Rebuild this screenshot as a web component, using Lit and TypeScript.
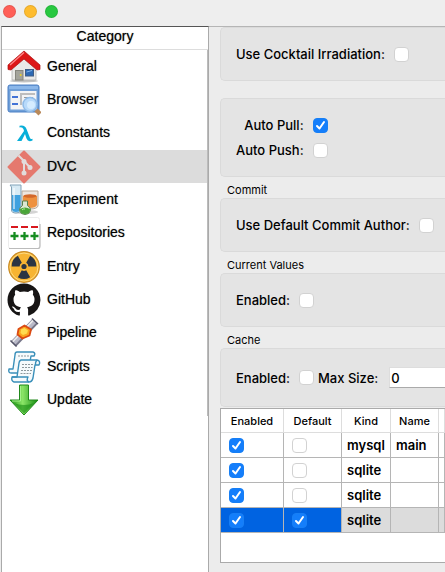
import { LitElement, html, css, svg, nothing } from "lit";
import { customElement, property, state } from "lit/decorators.js";
import { classMap } from "lit/directives/class-map.js";

const icons: Record<string, unknown> = {
  General: svg`
    <ellipse cx="17" cy="31" rx="14" ry="1.5" fill="#999" opacity=".6"/>
    <path d="M5 15 17 5 29 15V30H5Z" fill="#e9e9e7" stroke="#aaa" stroke-width=".7"/>
    <rect x="8.500" y="20.500" width="7.500" height="9.500" fill="#a3a39b" stroke="#85857d"/>
    <circle cx="13.700" cy="25" r="1" fill="#e8cf2c"/>
    <rect x="18.500" y="19.500" width="8" height="6.500" fill="#2c69b4" stroke="#3f5d84"/>
    <path d="M19.500 22 25 20.500" stroke="#85b5e6"/>
    <path d="M17 1 1 15V19.500L4 20 17 9 30 20 33 19.500V15Z" fill="#dd1717" stroke="#a90d0d" stroke-width=".7"/>
    <path d="M17 2.500 3 15" stroke="#ff8989" stroke-width="1.300" fill="none"/>`,
  Browser: svg`
    <rect x="1" y="2" width="31" height="27" rx="2" fill="#6f9fd8" stroke="#4c80c5"/>
    <path d="M2 4Q2 3 3 3H30Q31 3 31 4V6H2Z" fill="#8bb7ea"/>
    <rect x="3.500" y="8" width="26" height="18.500" fill="#f3f4f5"/>
    <path d="M5 14H11M5 21H11" stroke="#4373d6" stroke-width="2"/>
    <path d="M14 22V11H28" fill="none" stroke="#bdbdbd" stroke-width="2"/>
    <path d="M17 14.500H26" stroke="#999"/>
    <path d="m29 27 4 4" stroke="#b9895a" stroke-width="4.500"/>
    <circle cx="23" cy="21.500" r="7" fill="#b8dafa" stroke="#8fbbe8" stroke-width="1.500"/>
    <circle cx="24" cy="22" r="4" fill="#d5ecff"/>`,
  Constants: svg`
    <path d="M12.500 11.500V9.700Q18 8.500 19.500 13L23 22Q23.700 23.800 25.500 22.700V24.500Q21 26.500 19.500 22.500L18 18 14.500 25H10L17 15 16.500 13.300Q15.500 10.800 12.500 11.500Z" fill="#08afd9"/>`,
  DVC: svg`
    <path d="M17 1.500 32.500 17 17 32.500 1.500 17Z" fill="#e5796e" stroke="#e5796e" stroke-width="2" stroke-linejoin="round"/>
    <g fill="none" stroke="#e2dcdb" stroke-width="2"><path d="M11.500 5.500 17 11V23M17 11 23 17.500"/></g>
    <g fill="#e2dcdb"><circle cx="17" cy="11.500" r="2.500"/><circle cx="17" cy="23" r="2.500"/><circle cx="23" cy="17.500" r="2.500"/></g>`,
  Experiment: svg`
    <ellipse cx="18" cy="29" rx="13" ry="2" fill="#aaa" opacity=".5"/>
    <path d="M15 8H31V23Q30 26 23 26T15 24Z" fill="#eee6df" stroke="#b9a99a"/>
    <path d="M16 13Q22 11 30 13V22Q29 25 22 25T16 23Z" fill="#ee913f"/>
    <ellipse cx="23" cy="13" rx="6.500" ry="1.800" fill="#d3682b"/>
    <path d="M3 2H14V27Q13.500 30 9 30T4.500 27V4Z" fill="#d7eaf4" stroke="#83a3b8"/>
    <path d="M5 12H13.500V26.500Q12.500 29 9 29T5 26.500Z" fill="#3fa1df"/>
    <path d="M7 5V26" stroke="#fff" opacity=".7" stroke-width="1.500"/>
    <path d="M15.500 18H20.500V22.500Q24 24.500 23.500 27.500 22.500 31.500 18 31.500T12.500 27.500Q12 24.500 15.500 22.500Z" fill="#dce8d4" stroke="#58824d"/>
    <path d="M13 26Q18 23 23 26 23.500 31 18 31T13 26Z" fill="#4aa539"/>
    <path d="M15 27Q16 25.500 18 26" stroke="#b5ef95" fill="none"/>`,
  Repositories: svg`
    <rect x="1.500" y="1.500" width="31" height="31" rx="2" fill="#fff" stroke="#ececec"/>
    <path d="M2 32.500H31Q33 32.500 33 30V8" stroke="#bbb" stroke-width="1.200"/>
    <path d="M4 11H11M14 11H21M24 11H31" stroke="#d8181e" stroke-width="2"/>
    <path d="M3.500 20H11.500M13.500 20H21.500M23.500 20H31.500M7.500 16V24M17.500 16V24M27.500 16V24" stroke="#168c20" stroke-width="2.300"/>`,
  Entry: svg`
    <circle cx="17" cy="17" r="15.300" fill="#f7b432" stroke="#c98b25" stroke-width="1.200"/>
    <circle cx="17" cy="17" r="14" fill="none" stroke="#ffdc83"/>
    <g fill="#2b3443"><circle cx="17" cy="16.500" r="2.600"/>
      <path d="M14.800 20.300 10.800 27.200Q17 31 23.200 27.200L19.200 20.300Q17 21.500 14.800 20.300Z"/>
      <path transform="rotate(120 17 16.500)" d="M14.800 20.300 10.800 27.200Q17 31 23.200 27.200L19.200 20.300Q17 21.500 14.800 20.300Z"/>
      <path transform="rotate(240 17 16.500)" d="M14.800 20.300 10.800 27.200Q17 31 23.200 27.200L19.200 20.300Q17 21.500 14.800 20.300Z"/></g>`,
  GitHub: svg`
    <path transform="translate(.5 .5) scale(2.060)" fill="#171515" d="M8 0C3.580 0 0 3.580 0 8c0 3.540 2.290 6.530 5.470 7.590.4.070.55-.17.55-.38 0-.19-.01-.82-.01-1.490-2.010.37-2.530-.49-2.690-.94-.09-.23-.48-.94-.82-1.130-.28-.15-.68-.52-.01-.53.63-.01 1.080.58 1.230.82.72 1.210 1.870.87 2.330.66.070-.52.28-.87.51-1.070-1.780-.2-3.640-.89-3.640-3.950 0-.87.31-1.590.82-2.150-.08-.2-.36-1.020.08-2.120 0 0 .67-.21 2.200.82.64-.18 1.320-.27 2-.27s1.360.09 2 .27c1.530-1.040 2.200-.82 2.200-.82.44 1.100.16 1.920.08 2.120.51.56.82 1.270.82 2.150 0 3.070-1.870 3.750-3.650 3.950.29.25.54.73.54 1.480 0 1.070-.01 1.930-.01 2.200 0 .21.15.46.55.38A8.010 8.010 0 0 0 16 8c0-4.420-3.580-8-8-8z"/>`,
  Pipeline: svg`
    <path d="M6.500 28 28 5.500" stroke="#77778a" stroke-width="7.500"/>
    <path d="M6 27.500 27.500 5" stroke="#b9b9c8" stroke-width="5"/>
    <path d="M5 26.500 26.500 4" stroke="#eee" stroke-width="1.500"/>
    <path d="m3.500 24.500 6 6M25 2.500 31 8" stroke="#555568" stroke-width="1.500"/>
    <path d="m17.500 9.500 6.500 4-1.500 6-7 3-5-4 1-5.500Z" fill="#f9a51f" stroke="#dc4a12" stroke-width="1.800" stroke-linejoin="round"/>
    <path d="m17.500 12 3.500 2.500-1 3-4 1.500-2.500-2 .5-3.500Z" fill="#ffdc50"/>`,
  Scripts: svg`
    <g fill="#f5fafc" stroke="#398fb9" stroke-width="1.400" stroke-linejoin="round">
      <path d="M10 2H26Q29 3 27 6H24L21 23H4Q1 23 2 19H6L8 5Q8 2 10 2Z"/>
      <path d="M14 10H30Q34 11 32 15H28L26 28Q25 32 22 32H7Q4 31 5 27H10L12 13Q12 11 14 10Z"/>
      <path d="M30 10Q28 12 28.500 15M5 27H21Q19 31 22 32" fill="none"/></g>
    <path d="M11 6H23M15 14.500H26M15 17.500H25.500M14 20.500H25M13.500 23.500H24" stroke="#8c989d" stroke-dasharray="2 1"/>`,
  Update: svg`
    <defs><linearGradient id="leaf"><stop stop-color="#1d9213"/><stop offset=".45" stop-color="#8be567"/><stop offset="1" stop-color="#138a10"/></linearGradient></defs>
    <path d="M12.500 2H21.500V17H31L17 32 3 17H12.500Z" fill="url(#leaf)" stroke="#21891b" stroke-linejoin="round"/>
    <path d="M5 18H13.500V3" fill="none" stroke="#a5f28b"/>
    <path d="M7 20 17 30.500 27 20Q17 24 7 20Z" fill="#168b13" opacity=".6"/>`,
};

@customElement("check-field")
class CheckField extends LitElement {
  @property() label = "";
  @property({ type: Boolean }) checked = false;
  @property({ type: Boolean, reflect: true }) bare = false;

  static styles = css`
    :host { display: contents; }
    label { display: contents; cursor: default; }
    .text { text-align: right; white-space: nowrap; }
    .box {
      appearance: none;
      flex: none;
      box-sizing: border-box;
      width: 15px;
      height: 15px;
      margin: 0;
      border: 1px solid #d2d2d2;
      border-radius: 4px;
      background: #fff;
      display: block;
    }
    .box:checked {
      border-color: #177ff5;
      background: #147efb url("data:image/svg+xml,%3Csvg xmlns='http://www.w3.org/2000/svg' viewBox='0 0 13 13'%3E%3Cpath d='M3 7 5.500 9.500 10 3' fill='none' stroke='white' stroke-width='2' stroke-linecap='round' stroke-linejoin='round'/%3E%3C/svg%3E") center / 13px 13px;
    }
  `;

  render() {
    const toggle = (e: Event) => (this.checked = (e.target as HTMLInputElement).checked);
    return html`<label>
      ${this.bare ? nothing : html`<span class="text">${this.label}</span>`}
      <input class="box" type="checkbox" aria-label=${this.label} .checked=${this.checked} @change=${toggle} />
    </label>`;
  }
}

@customElement("app-root")
class AppRoot extends LitElement {
  @state() private category = "DVC";

  private rows = [
    { enabled: true, def: false, kind: "mysql", name: "main" },
    { enabled: true, def: false, kind: "sqlite", name: "" },
    { enabled: true, def: false, kind: "sqlite", name: "" },
    { enabled: true, def: true, kind: "sqlite", name: "", selected: true },
  ];

  static styles = css`
    :host {
      display: flex;
      flex-direction: column;
      min-height: 100vh;
      overflow: hidden;
      background: #ececec;
      color: #000;
      font: 500 13px/16px Inter, "Liberation Sans", sans-serif;
    }
    button { font: inherit; color: inherit; border: 0; padding: 0; margin: 0; background: none; }
    .titlebar { display: flex; gap: 8px; padding: 5px 3px 8px; background: #eee; }
    .light { width: 13px; height: 13px; border-radius: 50%; box-shadow: inset 0 0 0 1px #0000001a; }
    .close { background: #ff5f57; }
    .minimize { background: #febc2e; }
    .maximize { background: #28c840; }
    .body { display: grid; grid-template-columns: 209px minmax(0, 1fr); flex: 1; }
    .sidebar {
      box-sizing: border-box;
      background: #fff;
      border: 1px solid #aaa;
      border-top-color: #555;
      border-bottom: 0;
      margin-left: 1px;
      font: 14px/16px "Liberation Sans", Arial, sans-serif;
      text-shadow: 0 0 1px #0008;
    }
    .heading { margin: 0; font: inherit; text-align: center; padding: 1px 0 5px; border-bottom: 1px solid #ddd; }
    .list {
      display: grid;
      grid-auto-rows: 33px 33px 34px;
      list-style: none;
      margin: 0;
      padding: 0;
      border-right: 1px solid #bbb;
    }
    .item { display: flex; }
    .category { display: flex; align-items: center; gap: 6px; flex: 1; padding-left: 5px; text-align: left; text-shadow: inherit; }
    .category-name { padding-bottom: 2px; }
    .current { background: #dcdcdc; }
    .icon { width: 34px; height: 34px; flex: none; }
    .main { border-top: 1px solid #b5b5b5; padding-left: 11px; }
    .group { margin: 0; padding: 0; border: 0; min-width: 0; }
    .caption { padding: 0 0 0 7px; height: 21px; font-size: 11px; line-height: 26px; font-weight: 400; }
    .panel {
      display: flex;
      align-items: center;
      gap: 9px;
      min-height: 52px;
      padding-left: 15px;
      border: 1px solid #dadada;
      border-right: 0;
      border-radius: 5px 0 0 5px;
      background: #e4e4e4;
    }
    .stack { display: grid; grid-template-columns: max-content max-content; align-content: center; gap: 9px; height: 77px; margin-top: 17px; }
    .cache { min-height: 57px; }
    .size { display: flex; align-items: center; gap: 11px; flex: 1; margin-left: -5px; }
    .size-label { white-space: nowrap; }
    .number {
      flex: 1;
      min-width: 0;
      box-sizing: border-box;
      height: 21px;
      padding: 0 1px;
      border: 1px solid #ddd;
      border-right: 0;
      border-bottom-color: #aaa;
      font: inherit;
      background: #fff;
      color: inherit;
      outline: none;
    }
    .table-box { height: 153px; border: 1px solid #aaa; border-right: 0; background: #fff; margin-top: 1px; }
    .drives { border-collapse: separate; border-spacing: 0; table-layout: fixed; width: 100%; }
    .wide { width: 63px; }
    .default { width: 58px; }
    .kind { width: 49px; }
    .name { width: 48px; }
    .head { box-sizing: border-box; height: 24px; padding: 0; font-size: 11px; font-weight: 500; border-right: 1px solid #ddd; border-bottom: 1px solid #ddd; }
    .cell { box-sizing: border-box; height: 25px; padding: 0 0 0 5px; border-right: 1px solid #b5b5b5; border-bottom: 1px solid #b5b5b5; font-weight: 600; }
    .cell.tick { padding-left: 8px; }
    .picked .cell { background: #dcdcdc; }
    .picked .tick { background: #0063e1; }
  `;

  render() {
    return html`
      <header class="titlebar">
        <button class="light close" aria-label="Close"></button>
        <button class="light minimize" aria-label="Minimize"></button>
        <button class="light maximize" aria-label="Zoom"></button>
      </header>
      <div class="body">
        <nav class="sidebar">
          <h2 class="heading">Category</h2>
          <ul class="list">
            ${Object.keys(icons).map((name) => html`<li class="item">
              <button class=${classMap({ category: true, current: name === this.category })} @click=${() => (this.category = name)}>
                <svg class="icon" viewBox="0 0 34 34" fill="none" aria-hidden="true">${icons[name]}</svg>
                <span class="category-name">${name}</span>
              </button>
            </li>`)}
          </ul>
        </nav>
        <main class="main">
          <div class="panel"><check-field label="Use Cocktail Irradiation:"></check-field></div>
          <div class="panel stack">
            <check-field label="Auto Pull:" checked></check-field>
            <check-field label="Auto Push:"></check-field>
          </div>
          <fieldset class="group">
            <legend class="caption">Commit</legend>
            <div class="panel"><check-field label="Use Default Commit Author:"></check-field></div>
          </fieldset>
          <fieldset class="group">
            <legend class="caption">Current Values</legend>
            <div class="panel"><check-field label="Enabled:"></check-field></div>
          </fieldset>
          <fieldset class="group">
            <legend class="caption">Cache</legend>
            <div class="panel cache">
              <check-field label="Enabled:"></check-field>
              <div class="size">
                <label class="size-label" for="max-size">Max Size:</label>
                <input class="number" id="max-size" type="text" value="0" />
              </div>
            </div>
          </fieldset>
          <div class="table-box">
            <table class="drives">
              <colgroup><col class="wide" /><col class="default" /><col class="kind" /><col class="name" /><col /></colgroup>
              <thead><tr>
                <th class="head">Enabled</th><th class="head">Default</th><th class="head">Kind</th><th class="head">Name</th><th class="head"></th>
              </tr></thead>
              <tbody>
                ${this.rows.map((r) => html`<tr class=${classMap({ picked: !!r.selected })}>
                  <td class="cell tick"><check-field bare label="Enabled" .checked=${r.enabled}></check-field></td>
                  <td class="cell tick"><check-field bare label="Default" .checked=${r.def}></check-field></td>
                  <td class="cell">${r.kind}</td>
                  <td class="cell">${r.name}</td>
                  <td class="cell"></td>
                </tr>`)}
              </tbody>
            </table>
          </div>
        </main>
      </div>
    `;
  }
}
